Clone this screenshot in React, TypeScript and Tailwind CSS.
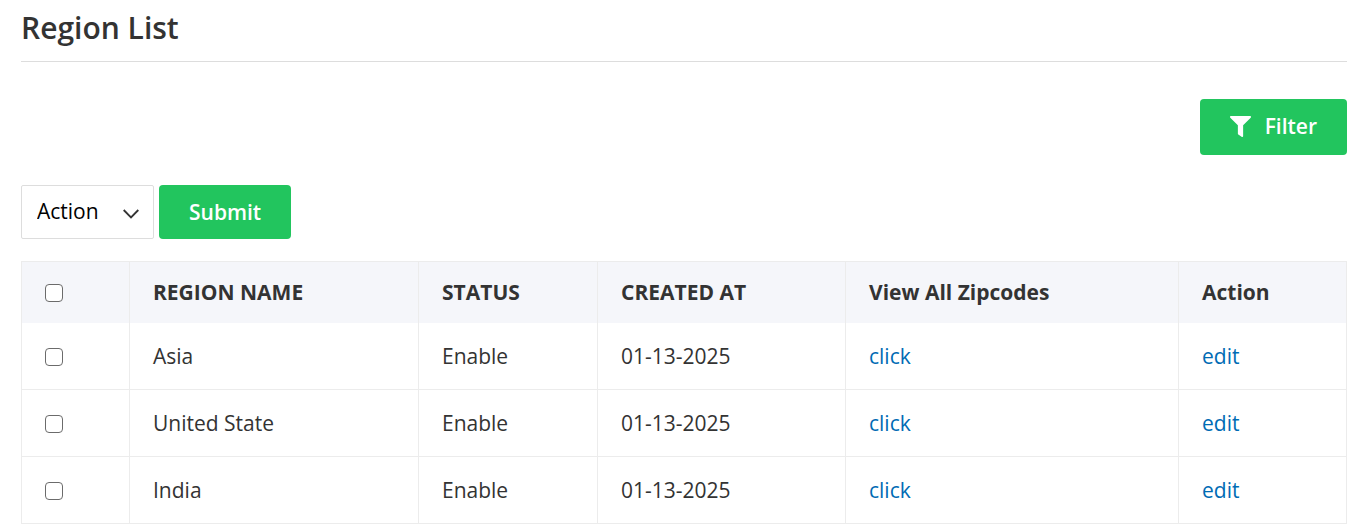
import { FaFilter } from "react-icons/fa";

const regions = [
  { id: 1, name: "Asia", status: "Enable", createdAt: "01-13-2025" },
  { id: 2, name: "United State", status: "Enable", createdAt: "01-13-2025" },
  { id: 3, name: "India", status: "Enable", createdAt: "01-13-2025" },
];

const columns = [
  { label: "REGION NAME", width: "w-[289px]" },
  { label: "STATUS", width: "w-[179px]" },
  { label: "CREATED AT", width: "w-[248px]" },
  { label: "View All Zipcodes", width: "w-[333px]" },
  { label: "Action", width: "w-[168px]" },
];

const cell = "border-x border-[#ececec] pl-[23px] pr-5";
const checkbox =
  "mt-0.5 block size-[18px] appearance-none rounded border border-[#6b6b6b] bg-white checked:bg-[#22c55e]";

export default function App() {
  return (
    <main className="pl-[21px] pr-[15px] pb-2 font-['Open_Sans',sans-serif] text-[21px] leading-[30px] text-[#333333]">
      <h1 className="border-b border-[#dddddd] pt-2 pb-[13px] text-[30px] leading-10 font-semibold">
        Region List
      </h1>

      <div className="mt-[37px] flex justify-end">
        <button
          type="button"
          className="flex h-14 items-center gap-[14px] rounded bg-[#22c55e] px-[30px] pb-0.5 font-semibold text-white"
        >
          <FaFilter className="size-[21px]" aria-hidden="true" />
          Filter
        </button>
      </div>

      {/* Bulk actions */}
      <form className="mt-[30px] flex gap-[5px]" onSubmit={(e) => e.preventDefault()}>
        <div className="relative">
          <select
            aria-label="Action"
            className="h-[54px] w-[133px] appearance-none rounded-xs border border-[#dddddd] bg-white pb-0.5 pl-[15px] text-black"
          >
            <option>Action</option>
            <option>Delete</option>
          </select>
          <svg
            viewBox="0 0 16 10"
            className="pointer-events-none absolute top-6 right-[15px] h-[10px] w-4"
            fill="none"
            stroke="#333333"
            strokeWidth="1.8"
            aria-hidden="true"
          >
            <path d="M.7 1L8 8.4 15.3 1" />
          </svg>
        </div>
        <button type="submit" className="h-[54px] rounded bg-[#22c55e] px-[30px] font-semibold text-white">
          Submit
        </button>
      </form>

      <table className="mt-[22px] w-full table-fixed border-collapse border border-[#ececec] text-left">
        <thead className="bg-[#f5f6fa]">
          <tr className="h-[61px]">
            <th className={`${cell} w-[108px]`}>
              <input type="checkbox" aria-label="Select all regions" className={checkbox} />
            </th>
            {columns.map((col) => (
              <th key={col.label} className={`${cell} ${col.width} font-bold`}>
                {col.label}
              </th>
            ))}
          </tr>
        </thead>
        <tbody>
          {regions.map((region) => (
            <tr key={region.id} className="h-[67px] border-b border-[#ececec]">
              <td className={cell}>
                <input type="checkbox" aria-label={`Select ${region.name}`} className={checkbox} />
              </td>
              <td className={cell}>{region.name}</td>
              <td className={cell}>{region.status}</td>
              <td className={cell}>{region.createdAt}</td>
              <td className={cell}>
                <a href="#zipcodes" className="text-[#006bb4]">click</a>
              </td>
              <td className={cell}>
                <a href="#edit" className="text-[#006bb4]">edit</a>
              </td>
            </tr>
          ))}
        </tbody>
      </table>
    </main>
  );
}
